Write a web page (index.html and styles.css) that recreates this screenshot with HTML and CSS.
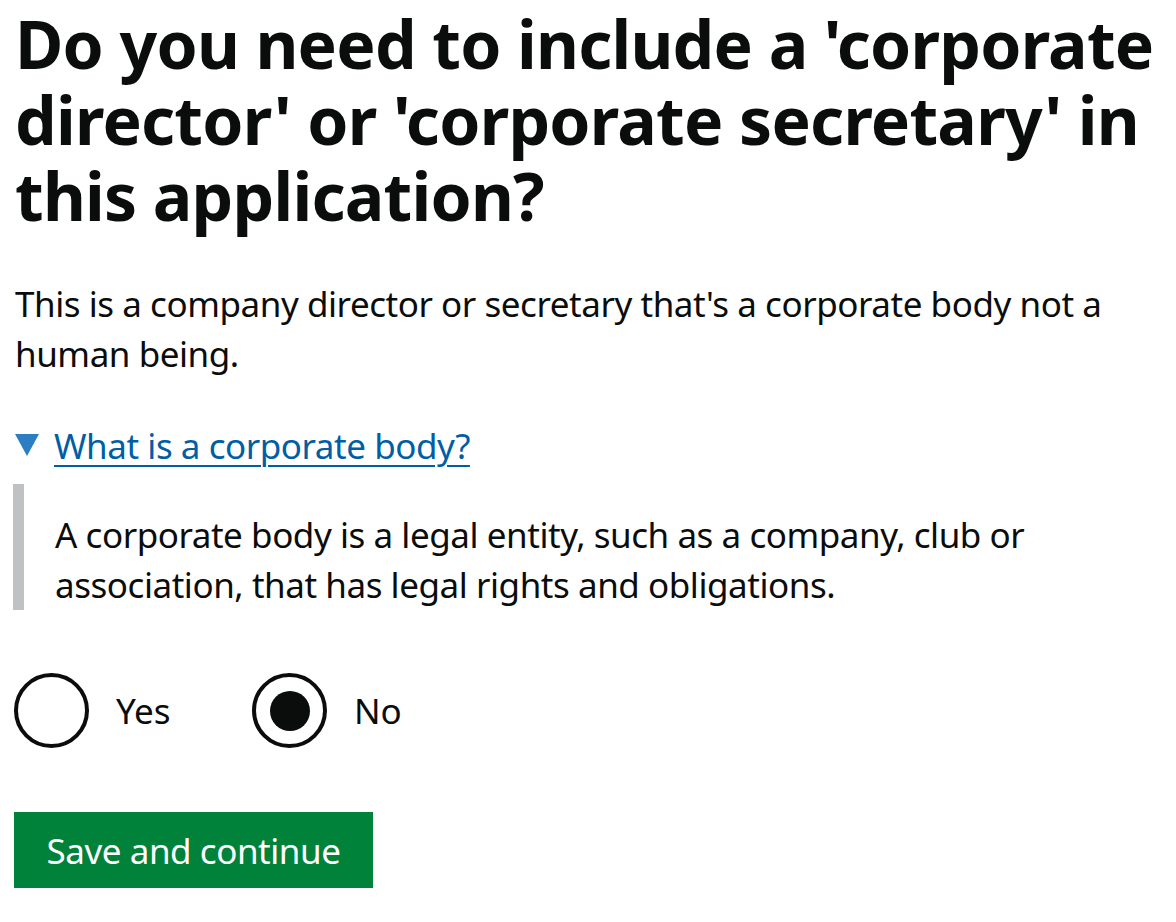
FILE: index.html
```html
<!DOCTYPE html>
<html lang="en">
<head>
<meta charset="utf-8">
<title>Corporate director or secretary</title>
<link rel="stylesheet" href="styles.css">
</head>
<body>
<main class="page">
  <h1 class="heading">Do you need to include a 'corporate director' or 'corporate secretary' in this application?</h1>
  <p class="body">This is a company director or secretary that's a corporate body not a human being.</p>
  <details class="details" open>
    <summary class="summary"><span class="arrow"></span><span class="summary-text">What is a corporate body?</span></summary>
    <div class="details-text">A corporate body is a legal entity, such as a company, club or association, that has legal rights and obligations.</div>
  </details>
  <div class="radios">
    <label class="radio"><input type="radio" name="corp" value="yes"><span class="radio-mark"></span><span class="radio-label">Yes</span></label>
    <label class="radio"><input type="radio" name="corp" value="no" checked><span class="radio-mark"></span><span class="radio-label">No</span></label>
  </div>
  <button class="button" type="submit">Save and continue</button>
</main>
</body>
</html>
```
FILE: styles.css
```css
html, body {
  margin: 0;
  padding: 0;
  background: #ffffff;
}
.page {
  padding: 0 0 0 15px;
  font-family: "Noto Sans", "Liberation Sans", sans-serif;
  color: #0b0c0c;
}
.heading {
  margin: 0;
  padding-top: 5px;
  font-size: 66px;
  line-height: 76px;
  font-weight: 700;
  letter-spacing: -0.75px;
}
.body {
  margin: 46px 0 0;
  font-size: 35px;
  line-height: 50px;
  letter-spacing: -0.45px;
}
.details {
  margin-top: 42px;
  font-size: 35px;
  line-height: 50px;
  letter-spacing: -0.45px;
}
.summary {
  list-style: none;
  display: flex;
  align-items: center;
  cursor: pointer;
}
.summary::-webkit-details-marker { display: none; }
.arrow {
  width: 0;
  height: 0;
  border-left: 12.5px solid transparent;
  border-right: 12.5px solid transparent;
  border-top: 22px solid #2b7ec1;
  margin-right: 15px;
  margin-top: -3px;
}
.summary-text {
  color: #005ea5;
  text-decoration: underline;
  text-underline-offset: 6px;
  text-decoration-thickness: 2px;
}
.details-text {
  margin: 13px 0 0 -2px;
  border-left: 11px solid #bfc1c3;
  padding: 26px 0 0 31px;
}
.radios {
  margin-top: 63px;
  display: flex;
}
.radio {
  display: flex;
  align-items: center;
  font-size: 35px;
  line-height: 50px;
}
.radio input {
  display: none;
}
.radio-mark {
  box-sizing: border-box;
  width: 75px;
  height: 75px;
  border: 4px solid #0b0c0c;
  border-radius: 50%;
  position: relative;
  margin-left: -1px;
}
.radio input:checked + .radio-mark::after {
  content: "";
  position: absolute;
  left: 13.5px;
  top: 13.5px;
  width: 40px;
  height: 40px;
  border-radius: 50%;
  background: #0b0c0c;
}
.radio-label {
  padding-left: 27px;
  width: 137px;
}
.button {
  display: block;
  margin-top: 64px;
  margin-left: -1px;
  width: 359px;
  height: 76px;
  border: 0;
  background: #00823b;
  box-shadow: 0 4px 0 #003618;
  color: #ffffff;
  font-family: "Noto Sans", "Liberation Sans", sans-serif;
  font-size: 35px;
  letter-spacing: -0.45px;
  line-height: 1;
  padding: 0;
  text-align: center;
}
```
